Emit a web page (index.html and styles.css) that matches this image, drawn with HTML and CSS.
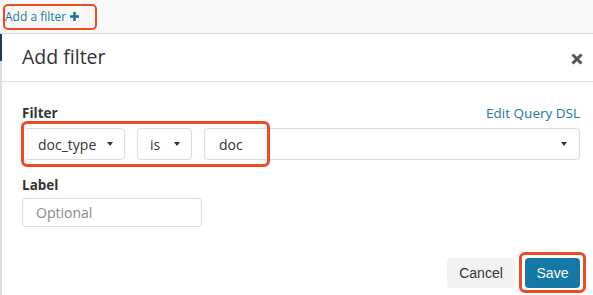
FILE: index.html
```html
<!DOCTYPE html>
<html>
<head>
<meta charset="utf-8">
<link rel="stylesheet" href="styles.css">
</head>
<body>
<div class="topbar">
  <a class="add-link">Add a filter <svg class="plus" width="9" height="9" viewBox="0 0 9 9"><rect x="3.2" y="0" width="2.6" height="9" fill="currentColor"/><rect x="0" y="3.2" width="9" height="2.6" fill="currentColor"/></svg></a>
  <div class="hl hl-top"></div>
</div>
<div class="main">
  <div class="edge"><div class="edge-dark"></div><div class="edge-light"></div></div>
  <div class="modal">
    <div class="modal-header">
      <div class="title">Add filter</div>
      <svg class="close" width="12" height="12" viewBox="0 0 12 12"><path d="M1.5 1.5 L10.5 10.5 M10.5 1.5 L1.5 10.5" stroke="#555" stroke-width="3" stroke-linecap="butt"/></svg>
    </div>
    <div class="modal-body">
      <div class="label-row">
        <span class="label">Filter</span>
        <a class="dsl">Edit Query DSL</a>
      </div>
      <div class="inputs-row">
        <div class="select sel-field"><span>doc_type</span><i class="caret"></i></div>
        <div class="select sel-op"><span>is</span><i class="caret"></i></div>
        <div class="select sel-val"><span>doc</span><i class="caret"></i></div>
        <div class="hl hl-row"></div>
      </div>
      <div class="label label2">Label</div>
      <div class="text-input">Optional</div>
      <div class="footer">
        <button class="btn btn-cancel">Cancel</button>
        <button class="btn btn-save">Save<span class="hl hl-save"></span></button>
      </div>
    </div>
  </div>
</div>
</body>
</html>
```

FILE: styles.css
```css
html, body {
  margin: 0;
  padding: 0;
}
body {
  width: 593px;
  height: 295px;
  overflow: hidden;
  font-family: "Open Sans", sans-serif;
  color: #333;
  background: #fff;
}
.topbar {
  position: relative;
  height: 33px;
  border-bottom: 1px solid #d9d9d9;
  background: #f7f7f7;
  display: flex;
  align-items: center;
  padding-left: 5px;
}
.add-link {
  font-size: 12px;
  color: #1a77a3;
  display: flex;
  align-items: center;
  gap: 4px;
  margin-top: -1px;
}
.plus {
  display: block;
}
.hl {
  position: absolute;
  border: 2.5px solid #f04a24;
  border-radius: 5px;
  box-sizing: border-box;
  pointer-events: none;
}
.hl-top {
  left: 3px;
  top: 4px;
  width: 94px;
  height: 26px;
}
.main {
  display: flex;
  height: 261px;
}
.edge {
  width: 2px;
  display: flex;
  flex-direction: column;
}
.edge-dark {
  height: 27px;
  background: #1d3b4d;
}
.edge-light {
  flex: 1;
  background: #dedede;
}
.modal {
  flex: 1;
  background: #fff;
  display: flex;
  flex-direction: column;
}
.modal-header {
  height: 47px;
  border-bottom: 1px solid #ddd;
  display: flex;
  align-items: center;
  justify-content: space-between;
  padding: 0 10px 0 20px;
}
.title {
  font-size: 19.5px;
  color: #333;
  margin-top: -2px;
}
.close {
  display: block;
  margin-top: 2px;
}
.modal-body {
  padding: 21px 13px 0 20px;
  display: flex;
  flex-direction: column;
}
.label-row {
  display: flex;
  justify-content: space-between;
  align-items: center;
  height: 20px;
}
.label {
  font-size: 13.5px;
  font-weight: bold;
  color: #333;
  line-height: 20px;
}
.dsl {
  font-size: 13.5px;
  color: #1a77a3;
}
.inputs-row {
  position: relative;
  display: flex;
  gap: 12px;
  margin-top: 5px;
  height: 32px;
  padding-left: 1px;
}
.select {
  box-sizing: border-box;
  height: 32px;
  border: 1px solid #dcdcdc;
  border-radius: 4px;
  background: #fff;
  display: flex;
  align-items: center;
  justify-content: space-between;
  padding: 0 11px 0 14px;
  font-size: 14px;
  color: #333;
}
.sel-field { width: 102px; }
.sel-op { width: 55px; padding-left: 12px; }
.sel-val { flex: 1; padding-right: 12px; }
.caret {
  width: 0;
  height: 0;
  border-left: 3.5px solid transparent;
  border-right: 3.5px solid transparent;
  border-top: 4px solid #333;
}
.hl-row {
  left: -1px;
  top: -7px;
  width: 249px;
  height: 46px;
  border-width: 3px;
  border-radius: 6px;
}
.label2 {
  margin-top: 15px;
}
.text-input {
  box-sizing: border-box;
  margin-top: 3px;
  width: 180px;
  height: 29px;
  border: 1px solid #dcdcdc;
  border-radius: 4px;
  display: flex;
  align-items: center;
  padding-left: 13px;
  font-size: 14px;
  color: #8a8a8a;
}
.footer {
  display: flex;
  justify-content: flex-end;
  gap: 10px;
  margin-top: 31px;
}
.btn {
  position: relative;
  height: 30px;
  border: none;
  border-radius: 4px;
  font-family: "Liberation Sans", Arial, sans-serif;
  font-size: 14px;
  padding: 0;
}
.btn-cancel {
  width: 68px;
  background: #f2f2f2;
  color: #333;
}
.btn-save {
  width: 55px;
  background: #1577a5;
  color: #fff;
}
.hl-save {
  left: -6px;
  top: -6px;
  width: 67px;
  height: 41px;
  border-width: 3px;
  border-radius: 6px;
}
```
